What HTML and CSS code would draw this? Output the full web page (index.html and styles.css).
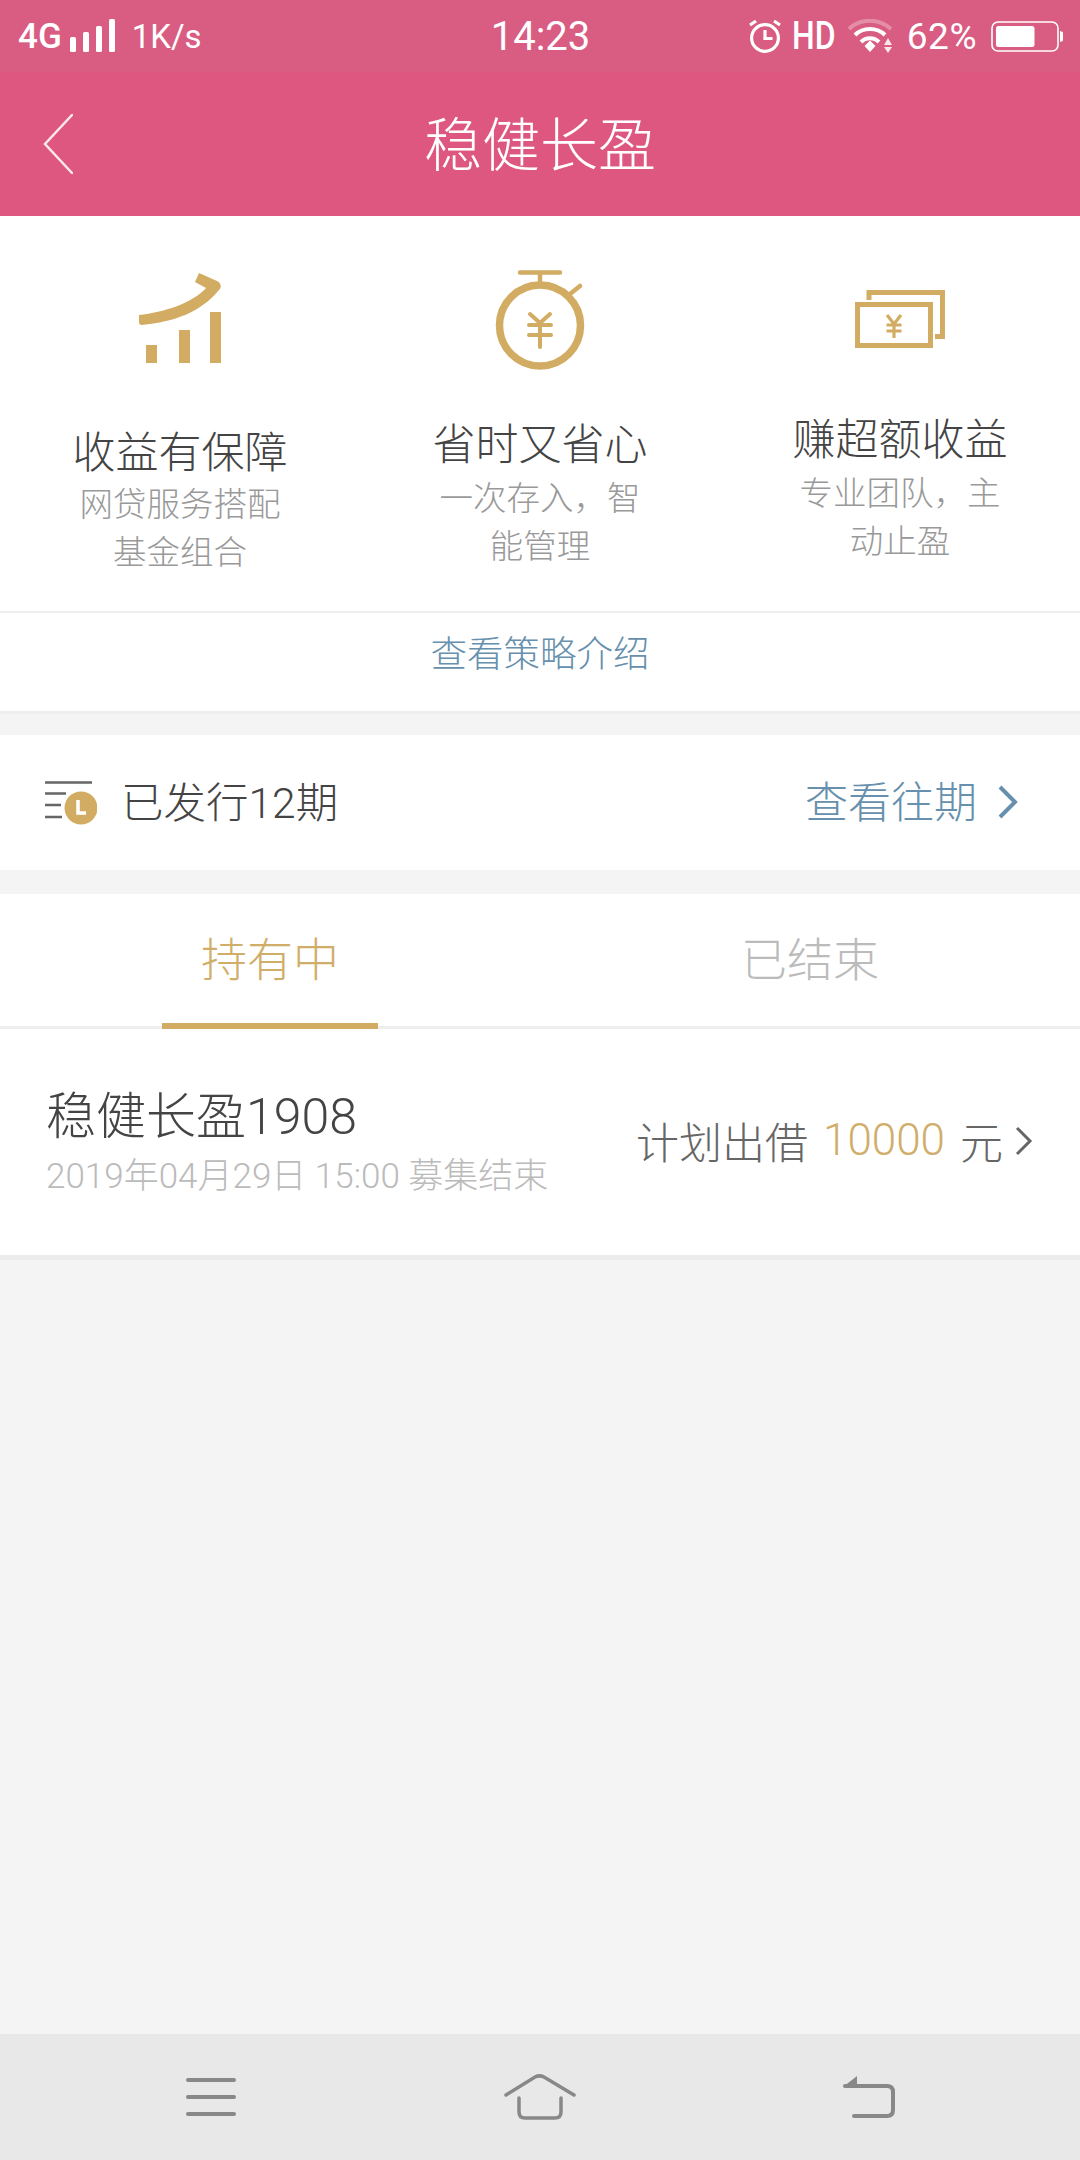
FILE: index.html
```html
<!DOCTYPE html>
<html lang="zh-CN">
<head>
<meta charset="utf-8">
<title>稳健长盈</title>
<link rel="stylesheet" href="styles.css">
</head>
<body>
<div class="page">
  <div class="status">
    <div class="status-left">
      <span class="net">4G</span>
      <svg class="signal" width="48" height="34" viewBox="0 0 48 34"><g fill="#fff"><rect x="0" y="18" width="6" height="15" rx="1.5"/><rect x="13" y="13" width="6" height="20" rx="1.5"/><rect x="26" y="7" width="6" height="26" rx="1.5"/><rect x="39" y="0" width="6" height="33" rx="1.5"/></g></svg>
      <span class="speed">1K/s</span>
    </div>
    <div class="time">14:23</div>
    <div class="status-right">
      <svg class="alarm" width="34" height="34" viewBox="0 0 34 34" fill="none" stroke="#fff" stroke-width="3.200"><circle cx="17" cy="19" r="13.400"/><path d="M17 11v8.500h7.500"/><path d="M2 6l6-4M32 6l-6-4" stroke-width="3.200"/></svg>
      <span class="hd">HD</span>
      <svg class="wifi" width="48" height="34" viewBox="0 0 48 34" fill="none" stroke="#fff" stroke-width="4"><path d="M2 10C13 -1 32 -1 44 10" stroke-opacity=".3"/><path d="M8 16C16 8 30 8 38 16"/><path d="M14 23C19 18 27 18 32 23"/><path d="M17.500 27L23 21.500 28.500 27 23 33z" fill="#fff" stroke="none"/><path d="M41 19l4 7h-8zM41 34l-4-6h8z" fill="#fff" stroke="none" fill-opacity=".85"/></svg>
      <span class="pct">62%</span>
      <svg class="battery" width="72" height="31" viewBox="0 0 72 31" fill="none"><rect x="1" y="1" width="66" height="29" rx="6" stroke="#fff" stroke-width="1.600"/><rect x="5" y="5" width="38.500" height="21" rx="2.500" fill="#fff"/><path d="M69 10c2 .5 3 1 3 2v7c0 1-1 1.500-3 2z" fill="#fff"/></svg>
    </div>
  </div>

  <header class="topbar">
    <svg class="back" width="30" height="60" viewBox="0 0 30 60" fill="none" stroke="#fce8ee" stroke-width="2.500" stroke-linecap="round"><path d="M29 1L2 30l27 29"/></svg>
    <h1 class="title">稳健长盈</h1>
  </header>

  <section class="features">
    <div class="feature-grid">
      <div class="feature feature-a">
        <svg class="ficon ficon-a" width="82" height="91" viewBox="0 0 82 91" fill="#d2ac62"><path d="M0 43C25 40 52 32 67 16L56 10 60 1 78 9C82 11 83 15 80 18 62 40 35 50 3 53 1 53 0 52 0 50z"/><rect x="7" y="73" width="11" height="18"/><rect x="40" y="58" width="11" height="33"/><rect x="71" y="40" width="11" height="51"/></svg>
        <div class="ftitle">收益有保障</div>
        <div class="fsub">网贷服务搭配基金组合</div>
      </div>
      <div class="feature feature-b">
        <svg class="ficon ficon-b" width="92" height="100" viewBox="0 0 92 100" fill="none" stroke="#d2ac62" stroke-linecap="round"><circle cx="46" cy="55.500" r="40.500" stroke-width="7.500"/><path d="M26 2.500h40M46 2.500V14" stroke-width="4.500"/><path d="M76 24l10-8" stroke-width="4.500"/><path d="M36 44l10 9 10-9M35 55h22M35 65h22M46 53v24" stroke-width="4"/></svg>
        <div class="ftitle">省时又省心</div>
        <div class="fsub">一次存入，智能管理</div>
      </div>
      <div class="feature feature-c">
        <svg class="ficon ficon-c" width="90" height="58" viewBox="0 0 90 58" fill="none" stroke="#d2ac62" stroke-width="5"><path d="M14 10V2.500h73.500v44H80"/><rect x="2.500" y="14.500" width="73" height="41"/><path d="M32 25l7 9 7-9M31.500 35h15M31.500 41h15M39 34v14" stroke-width="3.200"/></svg>
        <div class="ftitle">赚超额收益</div>
        <div class="fsub">专业团队，主动止盈</div>
      </div>
    </div>
    <div class="strategy">查看策略介绍</div>
  </section>

  <section class="issued">
    <div class="issued-left">
      <svg class="issued-icon" width="52" height="44" viewBox="0 0 52 44"><g stroke="#666" stroke-width="2.500"><path d="M0 1.500h47M0 12.500h21M0 24h16M0 36h17"/></g><circle cx="36" cy="27" r="16.500" fill="#d2ac62"/><path d="M33 19v13h8" fill="none" stroke="#fff" stroke-width="3.500"/></svg>
      <span class="issued-text">已发行12期</span>
    </div>
    <div class="issued-right">
      <span class="more">查看往期</span>
      <svg class="more-arrow" width="20" height="34" viewBox="0 0 20 34" fill="none" stroke="#6690ad" stroke-width="4"><path d="M2 2l15 15L2 32"/></svg>
    </div>
  </section>

  <section class="tabs">
    <div class="tab tab-active">持有中</div>
    <div class="tab">已结束</div>
  </section>

  <section class="item">
    <div class="item-left">
      <div class="item-name">稳健长盈1908</div>
      <div class="item-date">2019年04月29日 15:00 募集结束</div>
    </div>
    <div class="item-right">
      <span>计划出借</span>
      <span class="amount">10000</span>
      <span>元</span>
      <svg class="item-arrow" width="18" height="30" viewBox="0 0 18 30" fill="none" stroke="#666" stroke-width="3"><path d="M2 2l13 13L2 28"/></svg>
    </div>
  </section>

  <main class="rest"></main>

  <nav class="navbar">
    <svg width="50" height="40" viewBox="0 0 50 40" fill="none" stroke="#888" stroke-width="4" stroke-linecap="round"><path d="M2 3h46M2 20h46M2 37h46"/></svg>
    <svg width="72" height="46" viewBox="0 0 72 46" fill="none" stroke="#888" stroke-width="3.500" stroke-linecap="round"><path d="M2 21L31 3c3-1.500 6-1.500 9 0l30 18"/><path d="M15 24v14c0 4 2 6 6 6h30c4 0 6-2 6-6V24"/></svg>
    <svg width="52" height="42" viewBox="0 0 52 42" fill="none" stroke="#888" stroke-width="4" stroke-linecap="round"><path d="M2 10h42c4 0 6 2 6 6v18c0 4-2 6-6 6H11"/><path d="M0 11L14 0v11z" fill="#888" stroke="none"/></svg>
  </nav>
</div>
</body>
</html>
```
FILE: styles.css
```css
* { box-sizing: border-box; }
html, body { margin: 0; padding: 0; }
body {
  font-family: Roboto, "Noto Sans CJK SC", sans-serif;
  font-weight: 300;
  background: #f4f4f4;
  color: #444;
}
.page { width: 1080px; height: 2160px; display: flex; flex-direction: column; }

.status {
  height: 72px;
  flex: none;
  background: #d95c82;
  color: #fff;
  display: grid;
  grid-template-columns: 1fr auto 1fr;
  align-items: center;
  padding: 0 17px 0 18px;
}
.status-left, .status-right { display: flex; align-items: center; }
.status-right { justify-content: flex-end; }
.net { font-size: 35px; font-weight: 500; margin-right: 8px; }
.signal { margin-right: 14px; }
.speed { font-size: 33px; font-weight: 400; }
.time { font-size: 40px; font-weight: 400; }
.alarm { margin-right: 10px; }
.hd { font-size: 39px; font-weight: 500; transform: scaleX(.82); transform-origin: left center; width: 45px; margin-right: 10px; }
.wifi { margin-right: 12px; }
.pct { font-size: 37px; font-weight: 400; letter-spacing: .5px; margin-right: 14px; }

.topbar {
  height: 144px;
  flex: none;
  background: #de5780;
  display: flex;
  align-items: center;
  justify-content: center;
  position: relative;
}
.back { position: absolute; left: 43px; top: 42px; }
.title { margin: 0; padding-top: 4px; font-size: 58px; font-weight: 300; color: #fff; line-height: 1; }

.features { background: #fff; border-bottom: 3px solid #eee; flex: none; }
.feature-grid {
  height: 397px;
  display: grid;
  grid-template-columns: repeat(3, 1fr);
  border-bottom: 2px solid #eee;
}
.feature { display: flex; flex-direction: column; align-items: center; }
.feature-a { padding-top: 56px; }
.feature-b { padding-top: 54px; }
.feature-c { padding-top: 74px; }
.ficon { display: block; flex: none; }
.ficon-a { margin-bottom: 60px; }
.ficon-b { margin-bottom: 45px; }
.ficon-c { margin-bottom: 62px; }
.ftitle { font-size: 43px; line-height: 60px; color: #444; }
.fsub { width: 204px; font-size: 33.500px; line-height: 48px; color: #999; text-align: center; }
.feature-a .fsub { margin-top: -2px; }
.strategy { height: 98px; padding-bottom: 22px; display: flex; align-items: center; justify-content: center; font-size: 36.500px; color: #6690ad; }

.issued {
  margin-top: 21px;
  height: 135px;
  flex: none;
  background: #fff;
  display: flex;
  align-items: center;
  justify-content: space-between;
  padding: 0 62px 0 45px;
}
.issued-left, .issued-right { display: flex; align-items: center; }
.issued-icon { margin-right: 24px; }
.issued-text { font-size: 42.500px; color: #444; padding-bottom: 7px; }
.more { font-size: 43px; color: #6690ad; margin-right: 21px; padding-bottom: 7px; }
.more-arrow { margin-bottom: 2px; }

.tabs {
  margin-top: 24px;
  height: 135px;
  flex: none;
  background: #fff;
  display: grid;
  grid-template-columns: 1fr 1fr;
  border-bottom: 3px solid #eee;
}
.tab { display: flex; align-items: center; justify-content: center; padding-bottom: 8px; font-size: 46px; color: #bbb; position: relative; }
.tab-active { color: #d0ae6a; }
.tab-active::after { content: ""; position: absolute; left: 162px; width: 216px; height: 6px; bottom: -3px; background: #d2ac62; }

.item {
  height: 231px;
  flex: none;
  background: #fff;
  border-bottom: 5px solid #ececec;
  display: flex;
  align-items: center;
  justify-content: space-between;
  padding: 0 47px 0 46px;
}
.item-left { padding-top: 4px; }
.item-name { font-size: 50px; line-height: 60px; color: #444; }
.item-date { font-size: 35px; line-height: 48px; color: #bbb; margin-top: 6px; }
.item-right { display: flex; align-items: center; gap: 15px; font-size: 43px; color: #666; margin-top: -4px; }
.amount { font-size: 44px; color: #d0ae6a; }
.item-arrow { margin-left: -3px; margin-top: 2px; }

.rest { flex: 1; background: #f4f4f4; }

.navbar {
  height: 126px;
  flex: none;
  background: #e8e8e8;
  display: grid;
  grid-template-columns: repeat(3, 1fr);
  align-items: center;
  justify-items: center;
  padding: 0 47px;
}
```
